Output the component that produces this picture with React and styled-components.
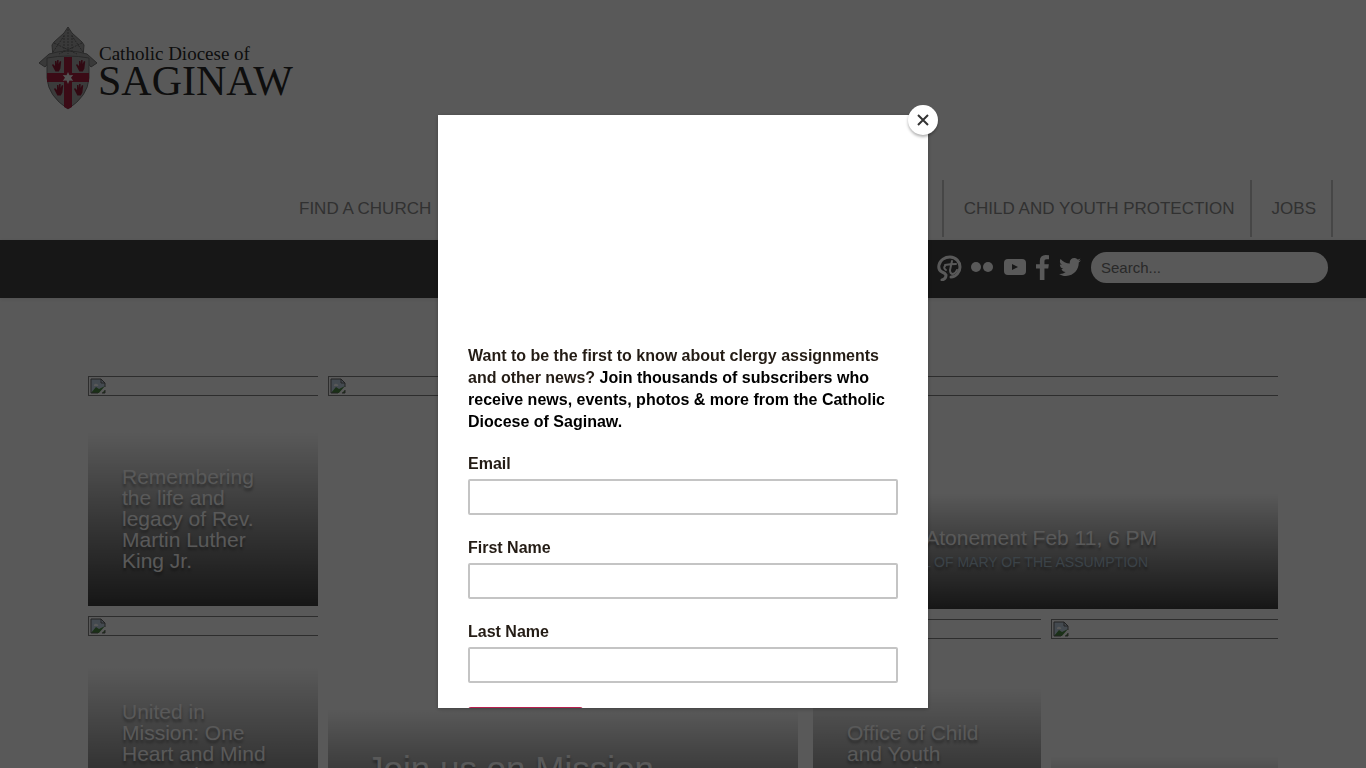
import React from 'react';
import styled, {createGlobalStyle} from 'styled-components';
import {FaTwitter} from 'react-icons/fa';

const COLORS = {
  WHITE: '#fff',
  BAR: '#424242',
  NAV_TEXT: '#8c8c8c',
  NAV_BORDER: '#c9c9c9',
  CRIMSON: '#a8203f',
  SUBTITLE: '#a9bfcf',
};

const GlobalStyle = createGlobalStyle`
  * {
    box-sizing: border-box;
  }

  body {
    background: ${COLORS.WHITE};
    font-family: "Liberation Sans", Arial, sans-serif;
    margin: 0;
    overflow: hidden;
  }

  a {
    color: inherit;
    text-decoration: none;
  }
`;

const Page = styled.div`
  height: 100vh;
  overflow: hidden;
`;

const Header = styled.header`
  display: flex;
  flex-direction: column;
  height: 240px;
  justify-content: space-between;
`;

const LogoLink = styled.a`
  align-items: flex-start;
  color: #2a2a2a;
  display: flex;
  font-family: "Liberation Serif", "Times New Roman", serif;
  padding: 26px 0 0 38px;
`;

const LogoText = styled.span`
  display: flex;
  flex-direction: column;
  padding-top: 18px;
`;

const LogoSmall = styled.span`
  font-size: 19px;
  line-height: 20px;
  padding-left: 1px;
`;

const LogoLarge = styled.span`
  font-size: 42px;
  line-height: 34px;
`;

const Nav = styled.nav`
  display: flex;
  height: 60px;
  margin-left: 279px;
  padding: 0 33px 3px 0;
`;

const NavItem = styled.a`
  border-right: 2px solid ${COLORS.NAV_BORDER};
  color: ${COLORS.NAV_TEXT};
  font-size: 17px;
  line-height: 57px;
  margin-right: ${props => (props.$push ? 'auto' : 0)};
  padding: 0 15px 0 20px;
`;

const NavDivider = styled.span`
  border-left: 2px solid ${COLORS.NAV_BORDER};
`;

const SocialBar = styled.div`
  align-items: center;
  background: ${COLORS.BAR};
  box-shadow: 0 1px 4px rgba(0, 0, 0, 0.1);
  color: ${COLORS.WHITE};
  display: flex;
  height: 58px;
  justify-content: flex-end;
  padding: 0 38px 4px 0;
`;

const SocialLinks = styled.div`
  align-items: center;
  display: flex;
  gap: 9px;
  margin-right: 10px;

  a {
    display: flex;
  }
`;

const SearchInput = styled.input`
  background: ${COLORS.WHITE};
  border: 0;
  border-radius: 16px;
  font-family: inherit;
  font-size: 15px;
  height: 31px;
  padding: 0 10px;
  width: 237px;

  &::placeholder {
    color: #757575;
  }
`;

const Tiles = styled.main`
  align-items: start;
  display: grid;
  gap: 10px;
  grid-template-columns: 230fr 470fr 470fr;
  margin: 78px 88px 0;
`;

const TileColumn = styled.div`
  display: flex;
  flex-direction: column;
  gap: 10px;
  padding-left: ${props => (props.$inset ? '5px' : 0)};
`;

const TileRow = styled.div`
  display: flex;
  gap: 10px;
`;

const StyledTile = styled.a`
  display: flex;
  flex: 1;
  flex-direction: column;
  justify-content: space-between;
  min-height: ${props => props.$height}px;
`;

const MissingImage = styled.span`
  border: solid #808080;
  border-width: 1px 0 1px 1px;
  display: block;
  height: 20px;
  padding: 1px;
`;

const Caption = styled.span`
  background: linear-gradient(rgba(0, 0, 0, 0), rgba(0, 0, 0, 0.75));
  color: ${COLORS.WHITE};
  display: flex;
  flex-direction: column;
  font-size: ${props => (props.$large ? '35px' : '21px')};
  line-height: ${props => (props.$large ? '35px' : '21px')};
  padding: ${props => (props.$large ? '42px 38px 34px' : '34px 34px 35px')};
  text-shadow: 0 3px 3px rgba(0, 0, 0, 0.4);
`;

const Subtitle = styled.span`
  color: ${COLORS.SUBTITLE};
  font-size: 14px;
  line-height: 18px;
  padding: 5px 0 3px;
`;

const Overlay = styled.div`
  background: rgba(0, 0, 0, 0.65);
  inset: 0;
  position: fixed;
`;

const Modal = styled.div`
  background: ${COLORS.WHITE};
  bottom: 60px;
  box-shadow: 0 1px 4px rgba(0, 0, 0, 0.3);
  left: 50%;
  margin-left: -245px;
  position: fixed;
  top: 115px;
  width: 490px;
`;

const CloseButton = styled.button`
  align-items: center;
  background: ${COLORS.WHITE};
  border: 0;
  border-radius: 50%;
  box-shadow: 0 2px 3px rgba(0, 0, 0, 0.3);
  display: flex;
  height: 30px;
  justify-content: center;
  padding: 0;
  position: absolute;
  right: -10px;
  top: -10px;
  width: 30px;
`;

const SignupForm = styled.form`
  color: #241c15;
  display: flex;
  flex-direction: column;
  font-size: 16px;
  font-weight: bold;
  height: 100%;
  overflow: hidden;
  padding: 30px 30px 0;
`;

const ImageSpace = styled.div`
  flex: none;
  height: 200px;
`;

const Intro = styled.p`
  line-height: 22px;
  margin: 0 0 21px;

  strong {
    color: #000;
  }
`;

const Field = styled.label`
  display: flex;
  flex: none;
  flex-direction: column;
  gap: 5px;
  line-height: 20px;
  margin-bottom: 23px;
`;

const FieldInput = styled.input`
  border: 2px solid #c4c4c4;
  border-radius: 2px;
  font: inherit;
  height: 36px;
  padding: 0 8px;
`;

const SubmitButton = styled.button`
  background: #b8204f;
  border: 0;
  border-radius: 3px;
  color: ${COLORS.WHITE};
  flex: none;
  height: 42px;
  margin-top: 1px;
  width: 115px;
`;

const HAND = 'M-4 -1l1 -1 2 2v-5l1.4 0v3l.8 -4 1.4 0v4l1.4 -3 1.2 .4-.8 7-1.6 3h-3.4z';

function Crest() {
  return (
    <svg width="60" height="84" viewBox="0 0 60 84" aria-hidden="true">
      <g fill="#a4a4a4" stroke="#777" strokeWidth="1">
        <path d="M30 1l-4 6-10 9-2 3 1 12h30l1-12-2-3-10-9z" />
        <path d="M1 37l10-9q19-6 38 0l10 9-6 4-6-7q-17-4-34 0l-6 7z" />
      </g>
      <path
        d="M30 3v25M26 9v18M34 9v18M16 17l23 11M44 17L21 28M15 26l11-16M45 26L34 10"
        fill="none"
        stroke="#6a6a6a"
        strokeDasharray="2 1"
      />
      <path
        d="M9 32q21-4 42 0v20q-1 18-21 31Q10 70 9 52z"
        fill="#a8a8a8"
        stroke="#777"
      />
      <path
        d="M26 31h8v16h17v9H34v25l-4 2-4-2V56H9v-9h17z"
        fill={COLORS.CRIMSON}
      />
      <g fill="#8c1c36">
        <path d={HAND} transform="translate(18 40)" />
        <path d={HAND} transform="translate(42 40)" />
        <path d={HAND} transform="translate(20 64)" />
        <path d={HAND} transform="translate(40 64)" />
      </g>
      <path
        d="M30 46l1.5 3.2 3.7-.3-2.2 2.9 2.2 3-3.7-.4L30 58l-1.5-3.6-3.7.4 2.2-3-2.2-2.9 3.7.3z"
        fill="#ededed"
      />
    </svg>
  );
}

function BrokenIcon() {
  return (
    <svg width="16" height="16" viewBox="0 0 16 16" aria-hidden="true">
      <path d="M1 1h10l4 4v10H1z" fill="#c3d5e6" />
      <path d="M1 15l5-6 3 2 6-3v7z" fill="#4d8a45" />
      <path d="M4 7q1-2 3-1 2 1 1 2H4z" fill="#fff" />
      <path d="M15 8l-7 8h3l4-4z" fill="#fff" />
      <path d="M1 15V1h10v4h4v4M15 12v3h-3M1 15h7" fill="none" stroke="#666" />
      <path d="M11 1l4 4" stroke="#666" />
    </svg>
  );
}

function SocialIcons() {
  return (
    <SocialLinks>
      <a href="#diocese" aria-label="Diocese">
        <svg
          width="26"
          height="28"
          viewBox="0 0 26 28"
          fill="none"
          stroke="currentColor"
          strokeLinecap="round"
        >
          <path
            d="M6 27q4-1 4-5-1-2-4-3Q2 17 3 12C4 7 9 4 14 4c6 0 10 5 10 10s-4 10-9 10"
            strokeWidth="3"
          />
          <path
            d="M16 8l-2 9q0 4 3 4 3-1 4-4M9 12q5-1 11-1M9 13q-2 2 1 4"
            strokeWidth="2"
          />
        </svg>
      </a>
      <a href="#flickr" aria-label="Flickr">
        <svg width="24" height="12" viewBox="0 0 24 12" fill="currentColor">
          <circle cx="5" cy="6" r="5" />
          <circle cx="17" cy="6" r="5" />
        </svg>
      </a>
      <a href="#youtube" aria-label="YouTube">
        <svg width="22" height="16" viewBox="0 0 22 16">
          <rect width="22" height="16" rx="4" fill="currentColor" />
          <path d="M8 5l6 3-6 3z" fill={COLORS.BAR} />
        </svg>
      </a>
      <a href="#facebook" aria-label="Facebook">
        <svg width="15" height="25" viewBox="479 0 864 1664" fill="currentColor">
          <path d="M1343 12v264h-157q-86 0-116 36t-30 108v189h293l-39 296h-254v759h-306v-759h-255v-296h255v-218q0-186 104-288.500t277-102.500q147 0 228 12z" />
        </svg>
      </a>
      <a href="#twitter" aria-label="Twitter">
        <FaTwitter size={22} />
      </a>
    </SocialLinks>
  );
}

function Tile({title, subtitle, height = 230, large}) {
  return (
    <StyledTile href="#story" $height={height}>
      <MissingImage>
        <BrokenIcon />
      </MissingImage>
      <Caption $large={large}>
        {title}
        {subtitle && <Subtitle>{subtitle}</Subtitle>}
      </Caption>
    </StyledTile>
  );
}

function SignupModal() {
  return (
    <Modal role="dialog" aria-label="Newsletter signup">
      <SignupForm>
        <ImageSpace />
        <Intro>
          Want to be the first to know about clergy assignments and other news?{' '}
          <strong>
            Join thousands of subscribers who receive news, events, photos &amp;
            more from the Catholic Diocese of Saginaw.
          </strong>
        </Intro>
        {['Email', 'First Name', 'Last Name'].map(label => (
          <Field key={label}>
            {label}
            <FieldInput type="text" />
          </Field>
        ))}
        <SubmitButton type="button" aria-label="Subscribe" />
      </SignupForm>
      <CloseButton type="button" aria-label="Close">
        <svg width="12" height="12" viewBox="0 0 12 12">
          <path d="M1 1l10 10M11 1L1 11" stroke="#333" strokeWidth="2" />
        </svg>
      </CloseButton>
    </Modal>
  );
}

function App() {
  return (
    <>
      <GlobalStyle />
      <Page>
        <Header>
          <LogoLink href="#home">
            <Crest />
            <LogoText>
              <LogoSmall>Catholic Diocese of</LogoSmall>
              <LogoLarge>SAGINAW</LogoLarge>
            </LogoText>
          </LogoLink>
          <Nav>
            <NavItem href="#church" $push>FIND A CHURCH</NavItem>
            <NavDivider />
            <NavItem href="#protection">CHILD AND YOUTH PROTECTION</NavItem>
            <NavItem href="#jobs">JOBS</NavItem>
          </Nav>
        </Header>
        <SocialBar>
          <SocialIcons />
          <SearchInput type="search" placeholder="Search..." aria-label="Search" />
        </SocialBar>
        <Tiles>
          <TileColumn>
            <Tile title="Remembering the life and legacy of Rev. Martin Luther King Jr." />
            <Tile
              title="United in Mission: One Heart and Mind Pastoral Letter"
              subtitle="BISHOP GRUSS"
            />
          </TileColumn>
          <TileColumn>
            <Tile title="Join us on Mission" subtitle="LEARN MORE" height={470} large />
          </TileColumn>
          <TileColumn $inset>
            <Tile
              title="Mass of Atonement Feb 11, 6 PM"
              subtitle="CATHEDRAL OF MARY OF THE ASSUMPTION"
              height={233}
            />
            <TileRow>
              <Tile
                title="Office of Child and Youth Protection"
                subtitle="LEARN MORE"
                height={227}
              />
              <Tile title="Calendar" height={227} />
            </TileRow>
          </TileColumn>
        </Tiles>
      </Page>
      <Overlay />
      <SignupModal />
    </>
  );
}

export default App;
